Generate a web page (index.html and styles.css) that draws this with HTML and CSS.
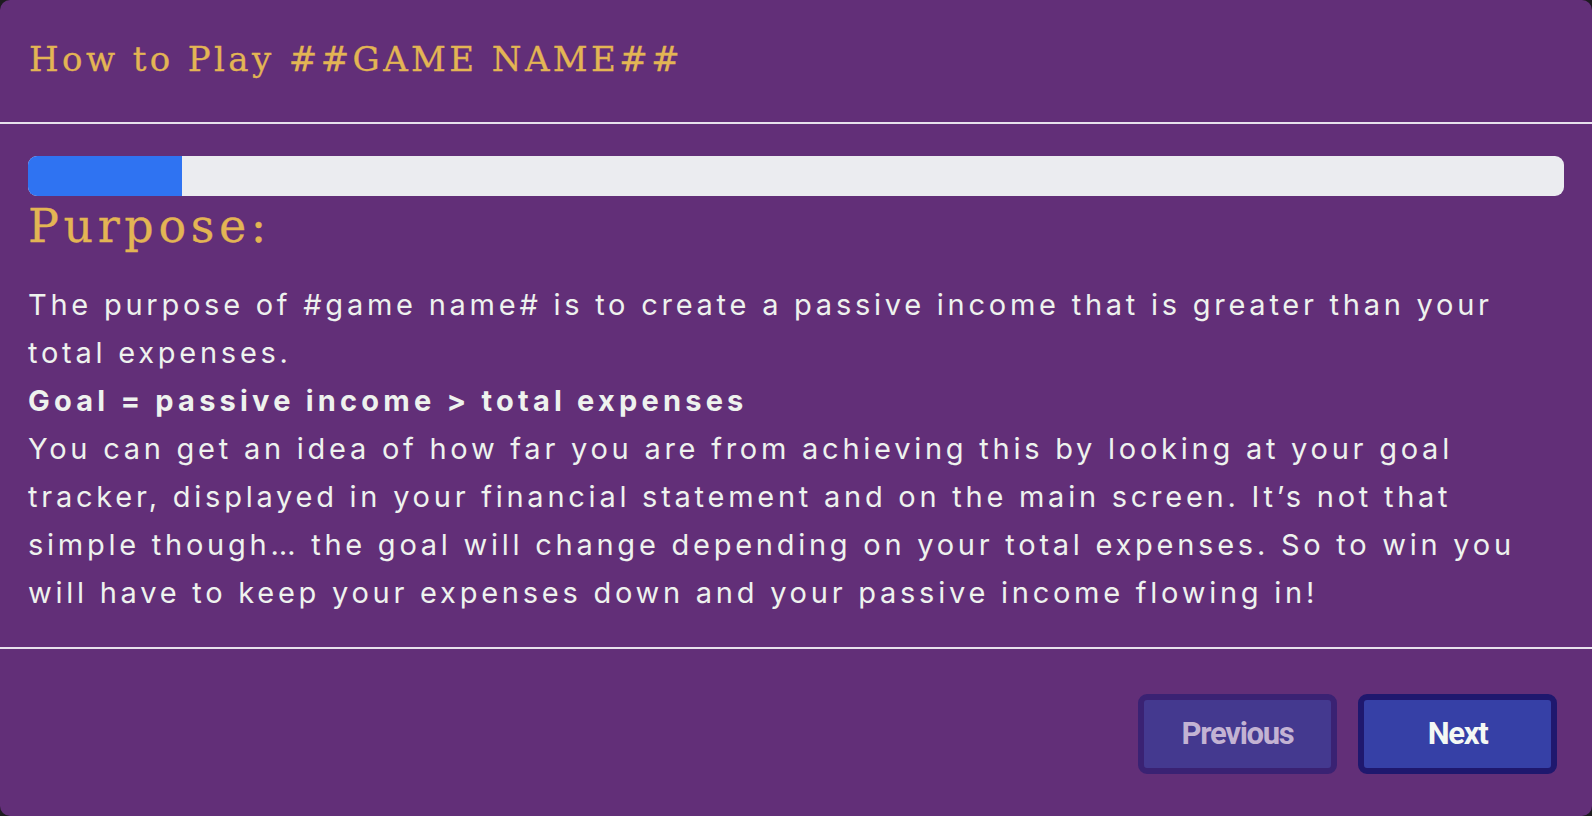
FILE: index.html
```html
<!DOCTYPE html>
<html lang="en">
<head>
<meta charset="utf-8">
<title>How to Play</title>
<link rel="stylesheet" href="styles.css">
</head>
<body>
<div class="modal">
  <header class="modal-header">
    <h1 class="modal-title">How to Play ##GAME NAME##</h1>
  </header>
  <section class="modal-body">
    <div class="progress"><div class="progress-fill" style="width:10%"></div></div>
    <h2 class="section-title">Purpose:</h2>
    <div class="section-text">
      <span class="line">The purpose of #game name# is to create a passive income that is greater than your total expenses.</span>
      <strong class="line">Goal = passive income &gt; total expenses</strong>
      <span class="line">You can get an idea of how far you are from achieving this by looking at your goal tracker, displayed in your financial statement and on the main screen. It’s not that simple though… the goal will change depending on your total expenses. So to win you will have to keep your expenses down and your passive income flowing in!</span>
    </div>
  </section>
  <footer class="modal-footer">
    <button class="btn btn-prev" type="button">Previous</button>
    <button class="btn btn-next" type="button">Next</button>
  </footer>
</div>
</body>
</html>
```

FILE: styles.css
```css
html, body {
  margin: 0;
  padding: 0;
  height: 100%;
}
body {
  background: #1d1b20;
}
.modal {
  height: 816px;
  box-sizing: border-box;
  background: #622f78;
  border-radius: 10px;
  display: flex;
  flex-direction: column;
  overflow: hidden;
}
.modal-header {
  height: 124px;
  box-sizing: border-box;
  padding: 0 29px;
  display: flex;
  align-items: center;
  border-bottom: 2px solid #e7e1ec;
}
.modal-title {
  margin: 0;
  font-family: "DejaVu Serif", "Liberation Serif", serif;
  font-weight: 400;
  font-size: 34px;
  letter-spacing: 0.1em;
  color: #e3b554;
  line-height: 1;
  padding-bottom: 4px;
  -webkit-text-stroke: 0.3px #e3b554;
}
.modal-body {
  padding: 32px 28px 30px;
  border-bottom: 2px solid #e7e1ec;
}
.progress {
  height: 40px;
  background: #ebecf0;
  border-radius: 9px;
  overflow: hidden;
}
.progress-fill {
  height: 100%;
  background: #2f73f2;
}
.section-title {
  margin: 4px 0 0;
  font-family: "DejaVu Serif", "Liberation Serif", serif;
  font-weight: 400;
  font-size: 46px;
  line-height: 1.15;
  letter-spacing: 0.1em;
  color: #e3b554;
  -webkit-text-stroke: 0.3px #e3b554;
}
.section-text {
  margin-top: 28px;
  font-family: Inter, "Noto Sans", sans-serif;
  font-size: 29px;
  line-height: 48px;
  letter-spacing: 3.75px;
  color: #eef2ee;
}
.line {
  display: block;
}
strong.line {
  font-weight: 700;
  letter-spacing: 4.2px;
}
.modal-footer {
  flex: 1;
  display: flex;
  justify-content: flex-end;
  align-items: flex-start;
  gap: 21px;
  padding: 45px 35px 0;
}
.btn {
  width: 199px;
  height: 80px;
  border-radius: 9px;
  border: 6px solid;
  font-family: Roboto, "Liberation Sans", sans-serif;
  font-weight: 700;
  font-size: 31px;
  letter-spacing: -1.3px;
  cursor: pointer;
}
.btn-prev {
  background: #44398f;
  border-color: #3a2273;
  color: #c3b3d3;
}
.btn-next {
  background: #3640a6;
  border-color: #1f186e;
  color: #f4f8f4;
}
```
